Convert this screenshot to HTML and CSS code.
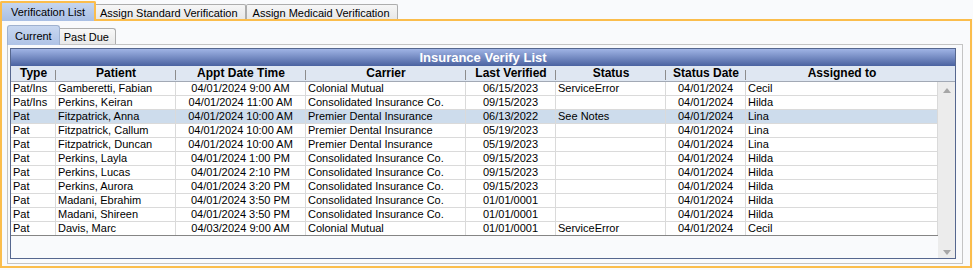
FILE: index.html
```html
<!DOCTYPE html>
<html lang="en">
<head>
    <meta charset="UTF-8">
    <meta name="viewport" content="width=device-width, initial-scale=1.0">
    <title>Insurance Verify List</title>
    <link rel="stylesheet" href="styles.css">
</head>
<body>

    <div class="tab-strip">
        <div class="tab active">Verification List</div>
        <div class="tab">Assign Standard Verification</div>
        <div class="tab">Assign Medicaid Verification</div>
    </div>

    <div class="tab-frame">
        <div class="subtab-strip">
            <div class="subtab active">Current</div>
            <div class="subtab">Past Due</div>
        </div>

        <div class="subtab-page">
            <div class="grid">
                <div class="grid-title">Insurance Verify List</div>

                <div class="grid-head">
                    <span>Type</span>
                    <span>Patient</span>
                    <span>Appt Date Time</span>
                    <span>Carrier</span>
                    <span>Last Verified</span>
                    <span>Status</span>
                    <span>Status Date</span>
                    <span>Assigned to</span>
                </div>

                <div class="grid-body">
                    <div class="grid-rows">
                        <div class="row">
                            <span>Pat/Ins</span><span>Gamberetti, Fabian</span><span class="c">04/01/2024 9:00 AM</span><span>Colonial Mutual</span><span class="c">06/15/2023</span><span>ServiceError</span><span class="c">04/01/2024</span><span>Cecil</span>
                        </div>
                        <div class="row">
                            <span>Pat/Ins</span><span>Perkins, Keiran</span><span class="c">04/01/2024 11:00 AM</span><span>Consolidated Insurance Co.</span><span class="c">09/15/2023</span><span></span><span class="c">04/01/2024</span><span>Hilda</span>
                        </div>
                        <div class="row selected">
                            <span>Pat</span><span>Fitzpatrick, Anna</span><span class="c">04/01/2024 10:00 AM</span><span>Premier Dental Insurance</span><span class="c">06/13/2022</span><span>See Notes</span><span class="c">04/01/2024</span><span>Lina</span>
                        </div>
                        <div class="row">
                            <span>Pat</span><span>Fitzpatrick, Callum</span><span class="c">04/01/2024 10:00 AM</span><span>Premier Dental Insurance</span><span class="c">05/19/2023</span><span></span><span class="c">04/01/2024</span><span>Lina</span>
                        </div>
                        <div class="row">
                            <span>Pat</span><span>Fitzpatrick, Duncan</span><span class="c">04/01/2024 10:00 AM</span><span>Premier Dental Insurance</span><span class="c">05/19/2023</span><span></span><span class="c">04/01/2024</span><span>Lina</span>
                        </div>
                        <div class="row">
                            <span>Pat</span><span>Perkins, Layla</span><span class="c">04/01/2024 1:00 PM</span><span>Consolidated Insurance Co.</span><span class="c">09/15/2023</span><span></span><span class="c">04/01/2024</span><span>Hilda</span>
                        </div>
                        <div class="row">
                            <span>Pat</span><span>Perkins, Lucas</span><span class="c">04/01/2024 2:10 PM</span><span>Consolidated Insurance Co.</span><span class="c">09/15/2023</span><span></span><span class="c">04/01/2024</span><span>Hilda</span>
                        </div>
                        <div class="row">
                            <span>Pat</span><span>Perkins, Aurora</span><span class="c">04/01/2024 3:20 PM</span><span>Consolidated Insurance Co.</span><span class="c">09/15/2023</span><span></span><span class="c">04/01/2024</span><span>Hilda</span>
                        </div>
                        <div class="row">
                            <span>Pat</span><span>Madani, Ebrahim</span><span class="c">04/01/2024 3:50 PM</span><span>Consolidated Insurance Co.</span><span class="c">01/01/0001</span><span></span><span class="c">04/01/2024</span><span>Hilda</span>
                        </div>
                        <div class="row">
                            <span>Pat</span><span>Madani, Shireen</span><span class="c">04/01/2024 3:50 PM</span><span>Consolidated Insurance Co.</span><span class="c">01/01/0001</span><span></span><span class="c">04/01/2024</span><span>Hilda</span>
                        </div>
                        <div class="row">
                            <span>Pat</span><span>Davis, Marc</span><span class="c">04/03/2024 9:00 AM</span><span>Colonial Mutual</span><span class="c">01/01/0001</span><span>ServiceError</span><span class="c">04/01/2024</span><span>Cecil</span>
                        </div>
                    </div>

                    <div class="scrollbar">
                        <span class="arrow up"></span>
                        <span class="arrow down"></span>
                    </div>
                </div>
            </div>
        </div>
    </div>

</body>
</html>
```

FILE: styles.css
```css
* {
    box-sizing: border-box;
}

body {
    margin: 0;
    width: 973px;
    height: 270px;
    overflow: hidden;
    background-color: #f9fafc;
    font-family: 'Liberation Sans', Arial, sans-serif;
    font-size: 11px;
    color: #000;
}

/* outer tabs */
.tab-strip {
    display: flex;
    align-items: flex-end;
    height: 19px;
}

.tab {
    height: 15px;
    padding: 2px 7px 0 6px;
    line-height: 13px;
    white-space: nowrap;
    border: 1px solid #adadad;
    border-bottom: none;
    border-radius: 2px 2px 0 0;
    background: linear-gradient(#f6f6f6, #e8e8e8);
}

.tab.active {
    position: relative;
    z-index: 1;
    height: 20px;
    margin-bottom: -2px;
    margin-right: -3px;
    padding: 3px 9px 0 9px;
    border: 2px solid #fbbd4c;
    border-bottom: none;
    background: linear-gradient(#c5d5ef, #a9bfe4);
}

.tab-frame {
    display: flex;
    flex-direction: column;
    width: 972px;
    height: 249px;
    padding: 0 7px 2px 5px;
    border: 2px solid #fbbd4c;
}

/* inner tabs */
.subtab-strip {
    display: flex;
    align-items: flex-end;
    height: 23px;
}

.subtab {
    height: 16px;
    padding: 2px 6px 0 6px;
    line-height: 13px;
    white-space: nowrap;
    border: 1px solid #adadad;
    border-bottom: none;
    border-radius: 3px 3px 0 0;
    background: linear-gradient(#f8f8f8, #e9e9e9);
}

.subtab.active {
    position: relative;
    z-index: 1;
    height: 20px;
    margin-bottom: -1px;
    margin-right: -3px;
    padding: 4px 7px 0 7px;
    border-color: #9fb1cf;
    background: linear-gradient(#c8d7f0, #afc3e6);
}

.subtab-page {
    flex: 1;
    padding: 3px 6px 4px 2px;
    border: 1px solid #c4c4c4;
}

/* data grid */
.grid {
    display: flex;
    flex-direction: column;
    height: 211px;
    border: 1px solid #56678f;
    background-color: #f9fafc;
}

.grid-title {
    height: 17px;
    line-height: 18px;
    text-align: center;
    font-size: 13px;
    font-weight: bold;
    color: #fff;
    background: linear-gradient(#a0b4e5, #4a62a0);
}

.grid-head,
.row {
    display: grid;
    grid-template-columns: 45px 120px 130px 160px 90px 110px 80px 1fr;
}

.grid-head {
    height: 16px;
    padding-right: 17px;
    border-bottom: 1px solid #a2a9b5;
    background-color: #dfe7f2;
    font-size: 12px;
    font-weight: bold;
}

.grid-head span {
    line-height: 15px;
    text-align: center;
    white-space: nowrap;
    background: linear-gradient(#8c8c8c, #8c8c8c) right 4px / 1px 10px no-repeat;
}

.grid-head span:last-child {
    background: none;
}

.grid-body {
    flex: 1;
    display: flex;
}

.grid-rows {
    flex: 1;
}

.row {
    height: 14px;
    border-bottom: 1px solid #dadada;
    background-color: #fff;
}

.row span {
    padding: 0 2px;
    line-height: 13px;
    white-space: nowrap;
    overflow: hidden;
    border-right: 1px solid #dadada;
}

.row .c {
    text-align: center;
}

.row.selected {
    background-color: #cddcec;
}

.row:last-child {
    border-bottom-color: #858585;
}

.scrollbar {
    width: 17px;
    display: flex;
    flex-direction: column;
    justify-content: space-between;
    align-items: center;
    padding: 6px 0 3px;
    background-color: #ececec;
}

.arrow {
    width: 0;
    height: 0;
    border-left: 4px solid transparent;
    border-right: 4px solid transparent;
}

.arrow.up {
    border-bottom: 5px solid #a6a6a6;
}

.arrow.down {
    border-top: 5px solid #a6a6a6;
}
```
